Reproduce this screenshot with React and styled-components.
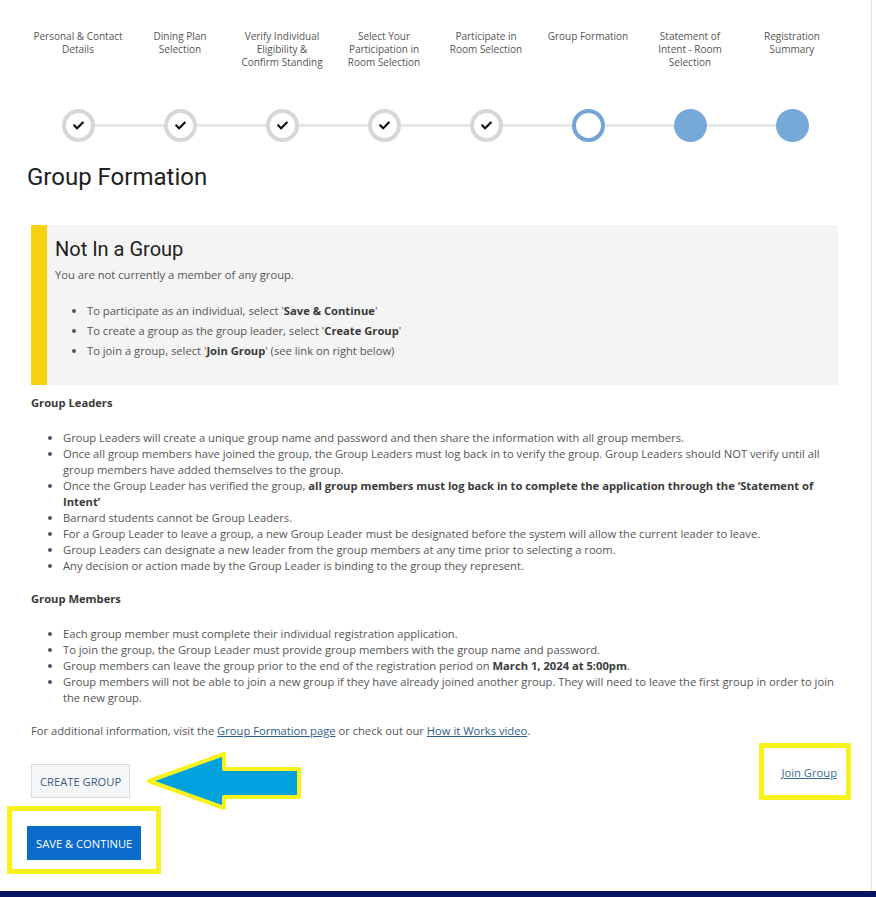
import React from "react";
import styled, { createGlobalStyle } from "styled-components";
import { FaCheck } from "react-icons/fa";

const steps = [
  { label: "Personal & Contact Details", state: "done", width: 96 },
  { label: "Dining Plan Selection", state: "done" },
  { label: "Verify Individual Eligibility & Confirm Standing", state: "done" },
  { label: "Select Your Participation in Room Selection", state: "done" },
  { label: "Participate in Room Selection", state: "done" },
  { label: "Group Formation", state: "active" },
  { label: "Statement of Intent - Room Selection", state: "todo" },
  { label: "Registration Summary", state: "todo" },
];

const GlobalStyle = createGlobalStyle`
  body {
    margin: 0;
    background: #fff;
    font-family: "Open Sans", "DejaVu Sans", sans-serif;
    color: #555;
  }
`;

const Page = styled.div`
  width: 871px;
  border-right: 1px solid #e4e4e4;
  padding-bottom: 17px;
`;

const Stepper = styled.div`
  display: grid;
  grid-template-columns: repeat(8, 102px);
  padding: 30px 0 0 27px;
`;

const Step = styled.div`
  position: relative;
  display: flex;
  flex-direction: column;
  align-items: center;

  &:not(:last-child)::before {
    content: "";
    position: absolute;
    left: 50%;
    width: 100%;
    bottom: 15px;
    height: 3px;
    background: #e6e6e6;
  }
`;

const StepLabel = styled.div`
  height: 79px;
  width: ${(p) => p.$width || 88}px;
  text-align: center;
  font-size: 10px;
  line-height: 13px;
  color: #555;
`;

const Dot = styled.div`
  position: relative;
  z-index: 1;
  box-sizing: border-box;
  width: 33px;
  height: 33px;
  border-radius: 50%;
  display: flex;
  align-items: center;
  justify-content: center;
  background: ${(p) => (p.$state === "todo" ? "#76a8d8" : "#fff")};
  border: ${(p) =>
    p.$state === "done"
      ? "4px solid #d7d7d7"
      : p.$state === "active"
      ? "4px solid #72a5d6"
      : "none"};
  svg {
    color: #111;
    font-size: 11px;
  }
`;

const Content = styled.div`
  padding: 0 33px 0 31px;
`;

const PageTitle = styled.h1`
  margin: 20px 0 0 -4px;
  font-family: Roboto, "Liberation Sans", sans-serif;
  font-weight: 400;
  font-size: 24px;
  line-height: 30px;
  color: #1e1e1e;
`;

const Callout = styled.div`
  margin-top: 33px;
  background: #f4f4f4;
  border-left: 16px solid #f8d20f;
  padding: 11px 20px 24px 8px;
`;

const CalloutTitle = styled.h2`
  margin: 0;
  font-family: Roboto, "Liberation Sans", sans-serif;
  font-weight: 400;
  font-size: 20px;
  line-height: 26px;
  color: #1e1e1e;
`;

const Text = styled.p`
  margin: ${(p) => p.$margin || "0"};
  font-size: 11.2px;
  line-height: 16px;
  color: #555;

  b {
    color: #3a3a3a;
  }
`;

const List = styled.ul`
  margin: ${(p) => p.$margin || "0"};
  padding-left: 32px;
  font-size: 11.2px;
  line-height: ${(p) => p.$line || "16px"};
  color: #555;

  b {
    color: #3a3a3a;
  }
`;

const SectionTitle = styled.h3`
  margin: ${(p) => p.$margin || "0"};
  font-size: 11.2px;
  line-height: 16px;
  font-weight: 700;
  color: #3a3a3a;
`;

const Link = styled.a`
  color: #2f5d8a;
  text-decoration: underline;
  cursor: pointer;
`;

const ActionRow = styled.div`
  display: flex;
  justify-content: space-between;
  align-items: flex-start;
  margin-top: 4px;
`;

const LeftActions = styled.div`
  display: flex;
  align-items: flex-start;
`;

const GhostButton = styled.button`
  margin-top: 21px;
  height: 34px;
  padding: 0 8px;
  background: #f5f6f7;
  border: 1px solid #dcdcdc;
  font-family: "Open Sans", sans-serif;
  font-size: 11.2px;
  color: #3b5d80;
  text-transform: uppercase;
`;

const PointerArrow = styled.svg`
  display: block;
  margin: 7px 0 -16px 15px;
`;

const Highlight = styled.div`
  border: 5px solid #f8f21c;
  padding: ${(p) => p.$pad};
  margin: ${(p) => p.$margin || "0"};
  display: inline-flex;
  align-items: center;
`;

const JoinLink = styled(Link)`
  font-size: 11.2px;
  line-height: 16px;
  color: #3a6a96;
`;

const PrimaryButton = styled.button`
  height: 34px;
  padding: 0 9px;
  background: #0a6bcb;
  border: none;
  font-family: "Open Sans", sans-serif;
  font-size: 11.2px;
  color: #fff;
  text-transform: uppercase;
`;

const FooterBar = styled.div`
  height: 7px;
  background: #0b1462;
`;

export default function App() {
  return (
    <>
      <GlobalStyle />
      <Page>
        <Stepper>
          {steps.map((s) => (
            <Step key={s.label}>
              <StepLabel $width={s.width}>{s.label}</StepLabel>
              <Dot $state={s.state}>{s.state === "done" && <FaCheck />}</Dot>
            </Step>
          ))}
        </Stepper>

        <Content>
          <PageTitle>Group Formation</PageTitle>

          <Callout>
            <CalloutTitle>Not In a Group</CalloutTitle>
            <Text $margin="5px 0 0">You are not currently a member of any group.</Text>
            <List $margin="18px 0 0" $line="20px">
              <li>
                To participate as an individual, select '<b>Save &amp; Continue</b>'
              </li>
              <li>
                To create a group as the group leader, select '<b>Create Group</b>'
              </li>
              <li>
                To join a group, select '<b>Join Group</b>' (see link on right below)
              </li>
            </List>
          </Callout>

          <SectionTitle $margin="10px 0 0">Group Leaders</SectionTitle>
          <List $margin="19px 0 0">
            <li>
              Group Leaders will create a unique group name and password and then share the
              information with all group members.
            </li>
            <li>
              Once all group members have joined the group, the Group Leaders must log back in to
              verify the group. Group Leaders should NOT verify until all group members have added
              themselves to the group.
            </li>
            <li>
              Once the Group Leader has verified the group,{" "}
              <b>
                all group members must log back in to complete the application through the
                ‘Statement of Intent’
              </b>
            </li>
            <li>Barnard students cannot be Group Leaders.</li>
            <li>
              For a Group Leader to leave a group, a new Group Leader must be designated before the
              system will allow the current leader to leave.
            </li>
            <li>
              Group Leaders can designate a new leader from the group members at any time prior to
              selecting a room.
            </li>
            <li>
              Any decision or action made by the Group Leader is binding to the group they represent.
            </li>
          </List>

          <SectionTitle $margin="17px 0 0">Group Members</SectionTitle>
          <List $margin="19px 0 0">
            <li>Each group member must complete their individual registration application.</li>
            <li>
              To join the group, the Group Leader must provide group members with the group name
              and password.
            </li>
            <li>
              Group members can leave the group prior to the end of the registration period on{" "}
              <b>March 1, 2024 at 5:00pm</b>.
            </li>
            <li>
              Group members will not be able to join a new group if they have already joined
              another group. They will need to leave the first group in order to join the new
              group.
            </li>
          </List>

          <Text $margin="17px 0 0">
            For additional information, visit the <Link>Group Formation page</Link> or check out
            our <Link>How it Works video</Link>.
          </Text>

          <ActionRow>
            <LeftActions>
              <GhostButton>Create Group</GhostButton>
              <PointerArrow width="158" height="62" viewBox="0 0 158 62">
                <polygon
                  points="4,31 79,4 79,19 154,19 154,47 79,47 79,58"
                  fill="#00a1dd"
                  stroke="#f8f21c"
                  strokeWidth="4"
                  strokeLinejoin="round"
                />
              </PointerArrow>
            </LeftActions>
            <Highlight $pad="17px 9px 14px 18px" $margin="0 -13px 0 0">
              <JoinLink>Join Group</JoinLink>
            </Highlight>
          </ActionRow>

          <Highlight $pad="15px 15px 9px 15px" $margin="6px 0 0 -24px">
            <PrimaryButton>Save &amp; Continue</PrimaryButton>
          </Highlight>
        </Content>
      </Page>
      <FooterBar />
    </>
  );
}
